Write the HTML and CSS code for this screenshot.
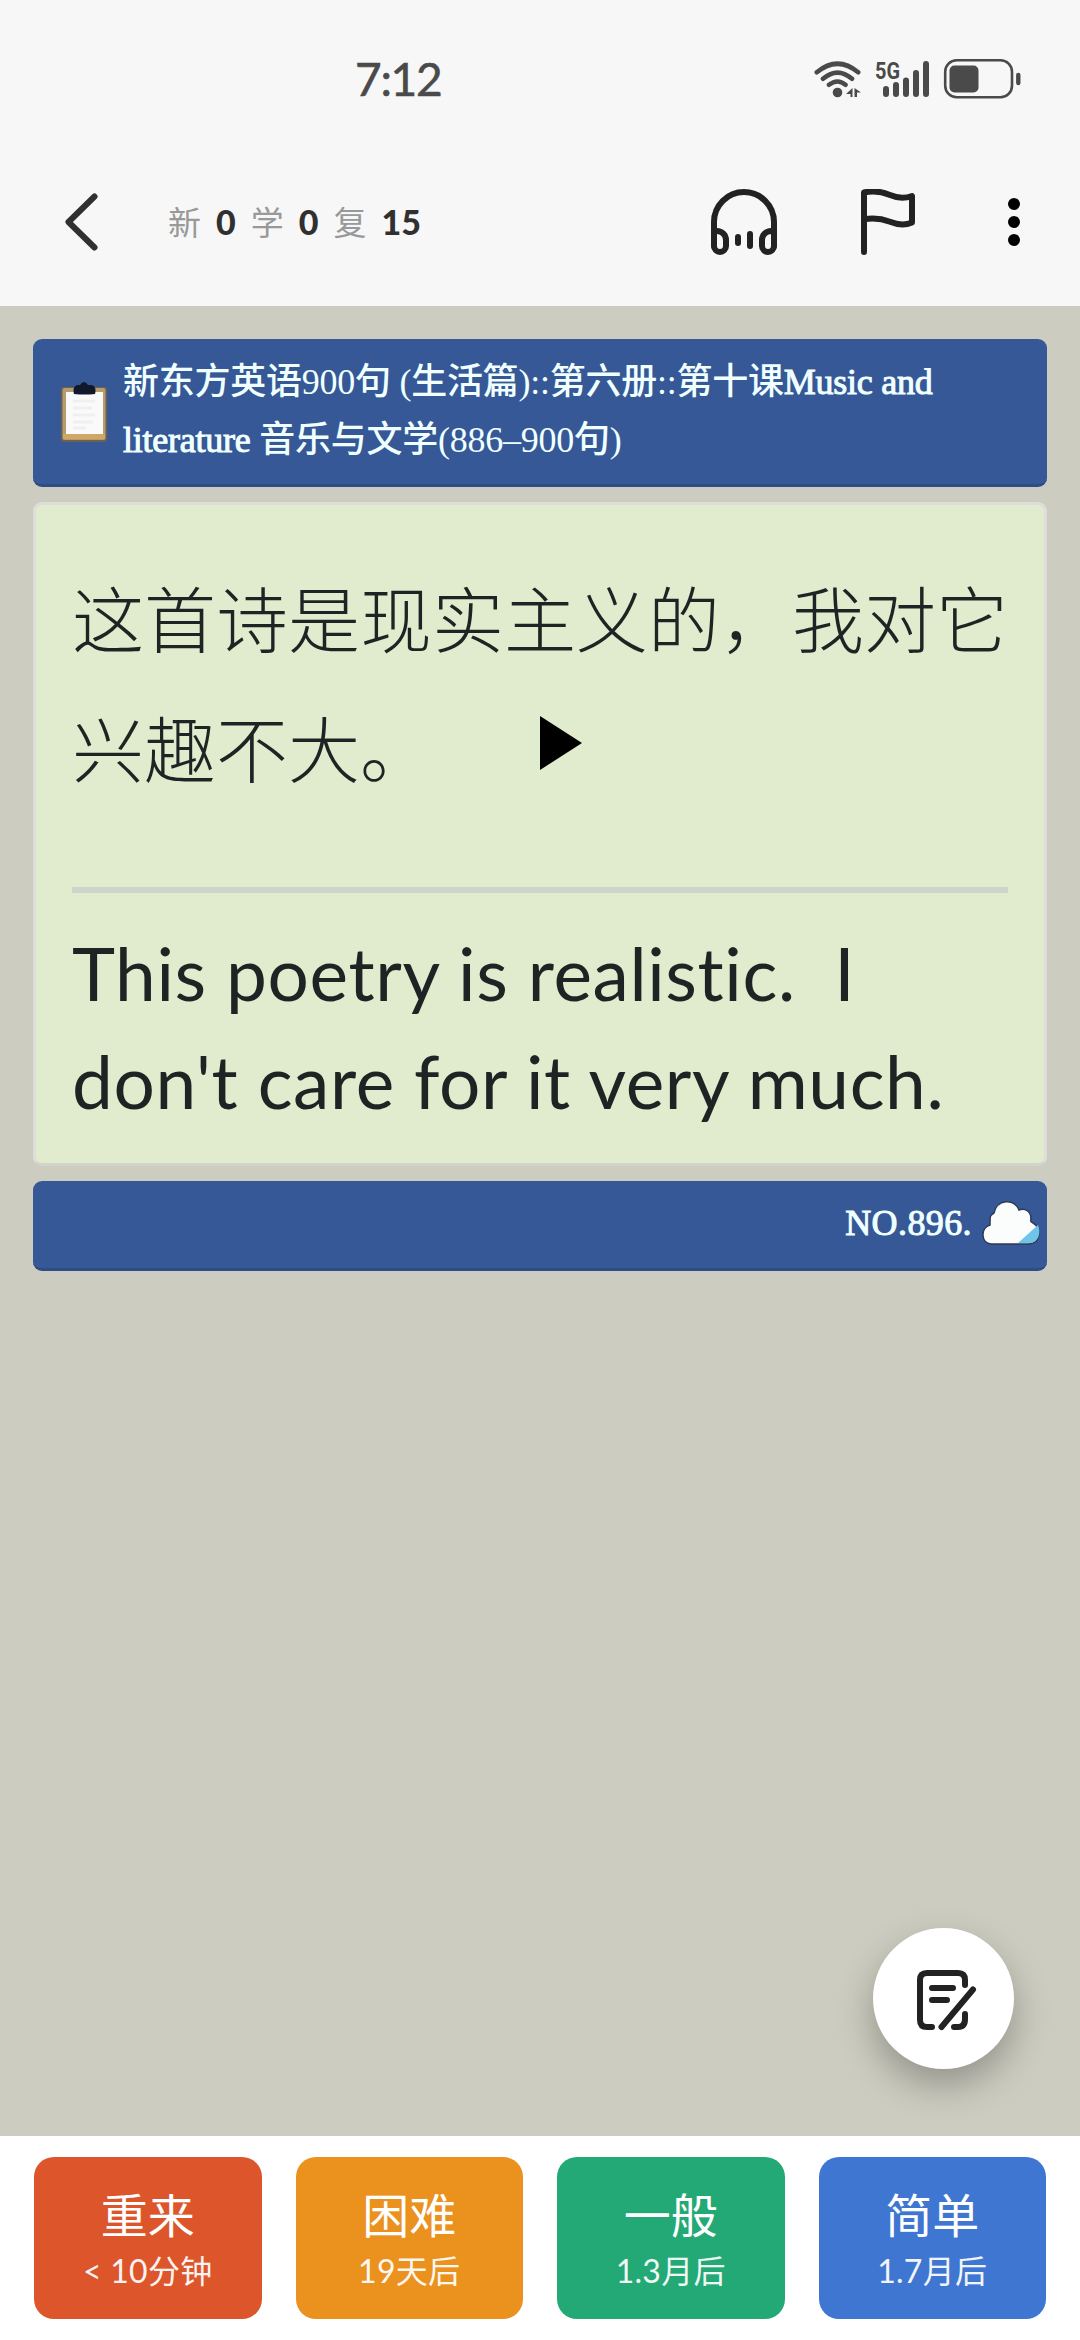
FILE: index.html
```html
<!DOCTYPE html>
<html lang="zh-CN">
<head>
<meta charset="utf-8">
<title>新东方英语900句</title>
<link rel="stylesheet" href="styles.css">
</head>
<body>
<div class="screen">
  <header class="top">
    <div class="status">
      <span class="clock">7:12</span>
      <svg class="status-icons" width="210" height="44" viewBox="814 57 210 44" fill="none" stroke="#4a4a4a" stroke-linecap="round">
        <g stroke-width="4.6">
          <path d="M816.800 72.300Q837.500 55.200 858.200 72.300M823 78.800Q837.500 66.400 852 78.800M829 84.800Q837.500 78.200 845.500 84.800"/>
        </g>
        <circle cx="837.500" cy="92.500" r="4.800" fill="#4a4a4a" stroke="none"/>
        <path d="M852.500 88v9h-2v-3h-4.500zM854.500 88l6.500 4.500h-4v4.500h-2.500z" fill="#4a4a4a" stroke="none"/>
        <path d="M886 89v5M896 85v9M906 80.500V94M916 73v21M926 64v30" stroke-width="6"/>
        <rect x="945.200" y="60.200" width="66.800" height="37" rx="11.500" stroke-width="2.600"/>
        <rect x="949.500" y="65.500" width="29" height="27" rx="5" fill="#4a4a4a" stroke="none"/>
        <path d="M1018.300 75v8" stroke-width="4.400"/>
        <text class="network" x="875" y="78.500" textLength="25" lengthAdjust="spacingAndGlyphs">5G</text>
      </svg>
    </div>
    <nav class="nav">
      <svg class="back" width="40" height="64" viewBox="60 190 40 64" fill="none" stroke="#303030" stroke-width="6" stroke-linecap="round" stroke-linejoin="round"><path d="M94.500 196.500L68.500 222l26 25.500"/></svg>
      <div class="counts">
        <span class="label">新</span><b>0</b><span class="label">学</span><b>0</b><span class="label">复</span><b>15</b>
      </div>
      <div class="actions">
        <svg width="66" height="66" viewBox="711 189 66 66" fill="none" stroke="#222" stroke-width="6" stroke-linecap="round">
          <path d="M714 246v-24a30 30 0 0 1 60 0v24"/>
          <path d="M714 231h3a9 9 0 0 1 9 9v6a6 6 0 0 1-12 0zM774 231h-3a9 9 0 0 0-9 9v6a6 6 0 0 0 12 0z"/>
          <path d="M738 237v6M750 234v12"/>
        </svg>
        <svg width="56" height="66" viewBox="860 189 56 66" fill="none" stroke="#222" stroke-width="6" stroke-linecap="round" stroke-linejoin="round">
          <path d="M864 252v-59.500c12-3 20 0 26 2.500 8 3.500 15 3.500 22 1v26.500c-7 3-14 2.500-22-.800-7-2.700-15-4.500-26-2.500"/>
        </svg>
        <svg width="14" height="50" viewBox="1007 197 14 50"><circle cx="1014" cy="204" r="6"/><circle cx="1014" cy="222" r="6"/><circle cx="1014" cy="240" r="6"/></svg>
      </div>
    </nav>
  </header>

  <main class="content">
    <section class="deck">
      <svg class="clipboard" width="50" height="64" viewBox="59 380 50 64">
        <rect x="61" y="387" width="46" height="55" rx="2.500" fill="#6b614f"/>
        <rect x="62.500" y="388" width="43" height="52" rx="2" fill="#b99c6c"/>
        <path d="M63 434h42v5H63z" fill="#cfa767"/>
        <path d="M66 392h37v42H66z" fill="#fafafa"/>
        <path d="M73 401h22M73 408h19M73 415h22M73 422h20M73 428h13" stroke="#eff0f0" stroke-width="3"/>
        <path d="M74 394q-2-8 4-9h2q4-6 8 0h3q6 1 4 9-10 1-21 0z" fill="#10192b"/>
      </svg>
      <h1 class="deck-title">新东方英语900句 (生活篇)::第六册::第十课<span class="latin">Music and</span><br><span class="latin">literature</span> 音乐与文学(886–900句)</h1>
    </section>

    <article class="card">
      <p class="question">这首诗是现实主义的，我对它<br>兴趣不大。<svg class="play" width="42" height="54" viewBox="0 0 42 54"><path d="M0 0l42 27L0 54z"/></svg></p>
      <hr class="rule">
      <p class="answer">This poetry is realistic.&nbsp; I<br>don't care for it very much.</p>
    </article>

    <section class="number">
      <span>NO.896.</span>
      <svg width="60" height="48" viewBox="980 1200 60 48">
        <path d="M990 1245c-10-1-11-16-1-19 0-9 0-10 4-12 3-14 20-15 25-3 6-2 12 1 12 9-1 3 0 3 2 4 9 5 8 20-4 21z" fill="#fbfdfd" stroke="#2b3a55" stroke-width="1.500"/>
        <path d="M1017 1244l20-18c3 8 1 16-7 18z" fill="#6fc4ea"/>
      </svg>
    </section>
  </main>

  <button class="fab" aria-label="编辑">
    <svg width="62" height="64" viewBox="915 1968 62 64" fill="none" stroke="#222" stroke-width="6" stroke-linecap="round" stroke-linejoin="round">
      <path d="M932 2027h-5q-7 0-7-7v-40q0-7 7-7h31q7 0 7 7v5M965 2014v5q0 8-7 8h-4"/>
      <path d="M932 1988h21M932 2000h15M973 1989.500l-31.500 37.500"/>
    </svg>
  </button>

  <footer class="grades">
    <button class="grade again"><span>重来</span><small>&lt; 10分钟</small></button>
    <button class="grade hard"><span>困难</span><small>19天后</small></button>
    <button class="grade good"><span>一般</span><small>1.3月后</small></button>
    <button class="grade easy"><span>简单</span><small>1.7月后</small></button>
  </footer>
</div>
</body>
</html>
```
FILE: styles.css
```css
* { box-sizing: border-box; }

body {
  margin: 0;
  background: #cdccc0;
  font-family: Lato, "Noto Sans CJK SC", sans-serif;
}

.screen {
  position: relative;
  display: flex;
  flex-direction: column;
  width: 1080px;
  height: 2340px;
  overflow: hidden;
}

.top {
  height: 306px;
  background: #f7f7f7;
}

.status {
  display: flex;
  justify-content: space-between;
  align-items: center;
  height: 158px;
  padding: 0 56px 0 355px;
}

.clock {
  color: #4a4a4a;
  font-size: 46px;
  line-height: 60px;
  letter-spacing: -1.3px;
  -webkit-text-stroke: 0.6px #4a4a4a;
}

.network {
  fill: #4a4a4a;
  stroke: none;
  font: bold 24px Roboto, sans-serif;
}

.nav {
  display: flex;
  align-items: center;
  height: 128px;
  padding: 0 59px 0 60px;
}

.counts {
  display: flex;
  align-items: center;
  gap: 15px;
  margin-left: 68px;
  font-size: 34px;
  line-height: 48px;
}

.counts .label {
  width: 33px;
  color: #999;
  font-size: 33px;
  font-weight: 400;
}

.counts b {
  color: #303030;
  font-weight: 900;
}

.actions {
  display: flex;
  align-items: center;
  gap: 83px;
  margin-left: auto;
}

.actions svg:last-child { margin-left: 8px; }

.content {
  display: flex;
  flex: 1;
  flex-direction: column;
  gap: 15px;
  padding: 33px;
}

.deck,
.number {
  display: flex;
  border-bottom: 3px solid #304d83;
  border-radius: 9px;
  background: #365896;
  color: #f0ffff;
  font-family: "Liberation Serif", "Noto Sans CJK SC", serif;
  font-size: 36px;
}

.deck {
  height: 148px;
  padding: 14px 0 0 26px;
}

.clipboard {
  flex: none;
  margin: 27px 14px 0 0;
}

.deck-title {
  margin: 0;
  font-size: 36px;
  font-weight: 500;
  line-height: 58px;
  letter-spacing: -0.25px;
  white-space: nowrap;
}

.latin,
.number span {
  -webkit-text-stroke: 1px #f0ffff;
}

.card {
  height: 664px;
  padding: 46px 36px 0;
  border: 3px solid #dddeda;
  border-bottom-color: #d2d3cc;
  border-radius: 9px;
  background: #e1ebcd;
  color: #1f2324;
}

.question {
  margin: 0;
  font-family: "Noto Sans CJK SC", sans-serif;
  font-size: 72px;
  font-weight: 300;
  line-height: 130px;
  white-space: nowrap;
}

.play {
  margin-left: 108px;
  vertical-align: 7px;
}

.rule {
  height: 6px;
  margin: 76px 0 26px;
  border: 0;
  background: #cfd3cc;
}

.answer {
  margin: 0;
  font-size: 73px;
  line-height: 108px;
  letter-spacing: 0.6px;
  font-variant-ligatures: none;
  white-space: nowrap;
}

.number {
  justify-content: flex-end;
  align-items: center;
  height: 90px;
  padding: 0 6px 3px 0;
}

.number span {
  margin-right: 9px;
  letter-spacing: 0.4px;
}

.fab {
  position: absolute;
  top: 1928px;
  left: 873px;
  display: flex;
  align-items: center;
  justify-content: center;
  width: 141px;
  height: 141px;
  padding: 2px 0 0 4px;
  border: 0;
  border-radius: 50%;
  background: #fff;
  box-shadow: 0 16px 36px rgba(0, 0, 0, 0.28);
}

.grades {
  display: grid;
  grid-template-columns: repeat(4, 1fr);
  gap: 34px;
  height: 204px;
  padding: 21px 34px;
  background: #fff;
}

.grade {
  display: flex;
  flex-direction: column;
  align-items: center;
  padding: 24px 0 0;
  border: 0;
  border-radius: 20px;
  color: #fff;
  font-family: Lato, "Noto Sans CJK SC", sans-serif;
}

.grade span {
  font-size: 47px;
  line-height: 68px;
}

.grade small {
  font-size: 32px;
  line-height: 44px;
  letter-spacing: 0.3px;
  opacity: 0.93;
}

.again { background: #dd562b; }
.hard { background: #ea911e; }
.good { background: #23a975; }
.easy { background: #3f76d1; }
```
